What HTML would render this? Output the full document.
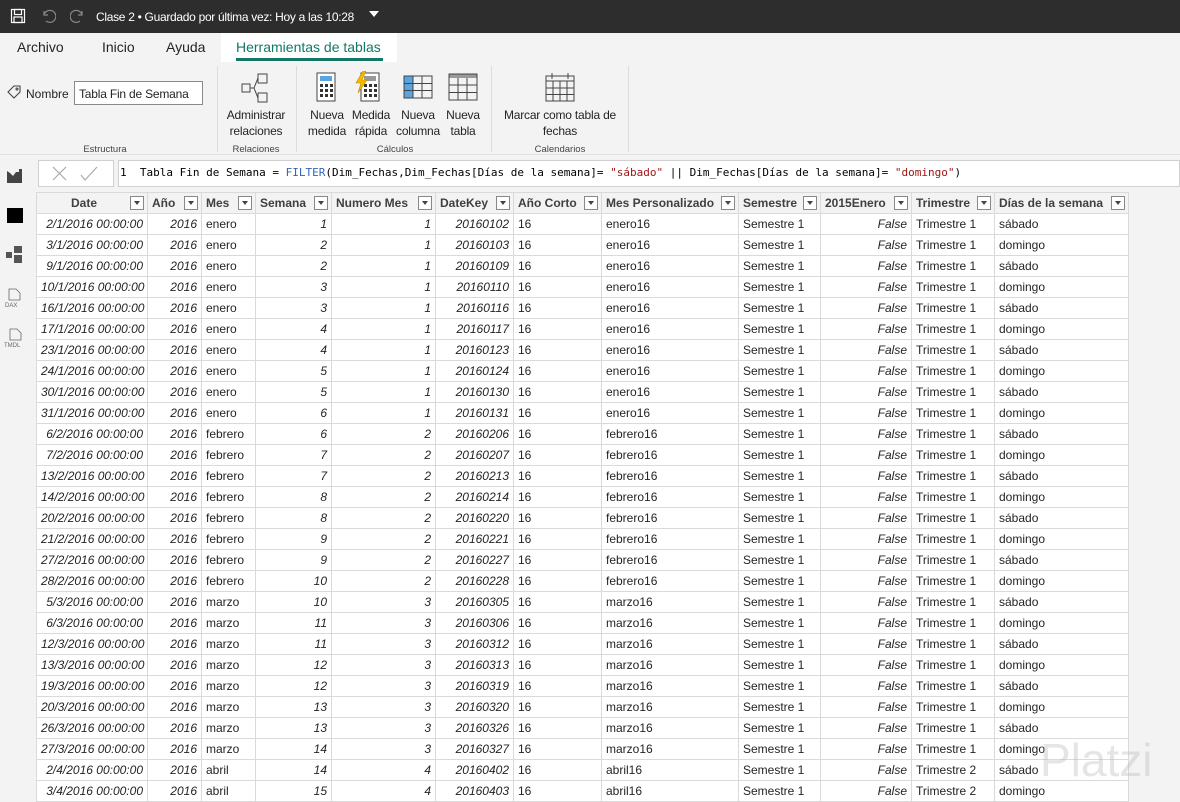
<!DOCTYPE html>
<html><head><meta charset="utf-8"><style>
*{box-sizing:border-box;margin:0;padding:0}
body{width:1180px;height:798px;overflow:hidden;background:#f3f3f3;font-family:"Liberation Sans",sans-serif;position:relative;color:#252423}
.title{position:absolute;left:0;top:0;width:1180px;height:33px;background:#2d2d2d;color:#fff;font-size:12px;letter-spacing:-0.3px}
.tabs{position:absolute;top:33px;left:0;width:1180px;height:30px;background:#f3f3f3;font-size:14px}
.tabs span{position:absolute;top:6px}
.ribbon{position:absolute;top:62px;left:0;width:1180px;height:93px;background:#f3f3f3;border-bottom:1px solid #e1e1e1;font-size:12px}
.lbl{position:absolute;top:82px;font-size:9.5px;color:#444;text-align:center}
.sep{position:absolute;top:4px;width:1px;height:86px;background:#dcdcdc}
.btn{position:absolute;text-align:center;line-height:16px;font-size:12px;letter-spacing:-0.2px}
.side{position:absolute;left:0;top:155px;width:30px;height:643px;background:#f3f3f3}
.fbar{position:absolute;left:118px;top:160px;width:1062px;height:27px;background:#fff;border:1px solid #d0d0d0;font-family:"DejaVu Sans Mono","Liberation Mono",monospace;font-size:11px;padding:5px 0 0 1px;white-space:pre;color:#000}
.xbox{position:absolute;left:38px;top:160px;width:76px;height:27px;background:#fff;border:1px solid #d0d0d0}
table{position:absolute;left:36px;top:192px;border-collapse:collapse;table-layout:fixed;width:1092px;background:#fff;font-size:12px}
td,th{border:1px solid #dadada;height:21px;padding:0 4px;white-space:nowrap;overflow:hidden}
th{background:#f3f3f3;font-weight:bold;font-size:12px;color:#404040;text-align:left;position:relative;padding-right:20px}
th.c{text-align:center}
th i{position:absolute;right:3px;top:3px;width:14px;height:14px;border:1px solid #888;background:#fff}
th i:after{content:"";position:absolute;left:3px;top:4px;border-left:3px solid transparent;border-right:3px solid transparent;border-top:4px solid #444}
td.r{text-align:right;font-style:italic}
</style></head><body>
<div class="title">
<svg style="position:absolute;left:10px;top:8px" width="16" height="16" viewBox="0 0 16 16" fill="none" stroke="#fff" stroke-width="1.2"><rect x="1.5" y="1.5" width="13" height="13"/><rect x="4.5" y="1.5" width="7" height="5"/><rect x="4" y="9" width="8" height="5.5"/></svg>
<svg style="position:absolute;left:40px;top:8px" width="16" height="16" viewBox="0 0 16 16" fill="none" stroke="#888" stroke-width="1.2"><path d="M4 3v4h4M4 7a6 6 0 1 1 2 6"/></svg>
<svg style="position:absolute;left:70px;top:8px" width="16" height="16" viewBox="0 0 16 16" fill="none" stroke="#888" stroke-width="1.2"><path d="M12 3v4H8M12 7a6 6 0 1 0-2 6"/></svg>
<span style="position:absolute;left:96px;top:10px">Clase 2 • Guardado por última vez: Hoy a las 10:28</span>
<span style="position:absolute;left:369px;top:11px;border-left:5px solid transparent;border-right:5px solid transparent;border-top:6px solid #fff"></span>
</div>
<div class="tabs">
<span style="left:17px">Archivo</span><span style="left:102px">Inicio</span><span style="left:166px">Ayuda</span>
<div style="position:absolute;left:221px;top:0;width:176px;height:30px;background:#fff"></div>
<span style="left:236px;color:#117865">Herramientas de tablas</span>
<div style="position:absolute;left:236px;top:25px;width:147px;height:3px;background:#117865"></div>
</div>
<div class="ribbon">
<svg style="position:absolute;left:6px;top:22px" width="16" height="16" viewBox="0 0 16 16" fill="none" stroke="#444" stroke-width="1.1"><path d="M2 8l6-6h6v6l-6 6z"/><circle cx="11" cy="5" r="1"/></svg>
<span style="position:absolute;left:26px;top:25px">Nombre</span>
<div style="position:absolute;left:74px;top:19px;width:129px;height:24px;background:#fff;border:1px solid #8a8a8a;padding:5px 4px;font-size:12px;letter-spacing:-0.2px">Tabla Fin de Semana</div>
<div class="lbl" style="left:60px;width:90px">Estructura</div>
<div class="sep" style="left:217px"></div>
<svg style="position:absolute;left:240px;top:10px" width="32" height="32" viewBox="0 0 32 32" fill="none" stroke="#444" stroke-width="1"><rect x="2" y="12" width="8" height="8"/><rect x="18" y="2" width="9" height="9"/><rect x="18" y="21" width="9" height="9"/><path d="M10 16h4M14 16l4-10M14 16l4 10"/></svg>
<div class="btn" style="left:222px;top:45px;width:68px">Administrar<br>relaciones</div>
<div class="lbl" style="left:222px;width:68px">Relaciones</div>
<div class="sep" style="left:296px"></div>
<svg style="position:absolute;left:316px;top:10px" width="20" height="30" viewBox="0 0 20 30"><rect x="1" y="1" width="18" height="28" fill="#fff" stroke="#444"/><rect x="4" y="4" width="12" height="5" fill="#5aa4e0"/><g fill="#333"><rect x="4" y="12" width="3" height="3"/><rect x="9" y="12" width="3" height="3"/><rect x="14" y="12" width="3" height="3"/><rect x="4" y="17" width="3" height="3"/><rect x="9" y="17" width="3" height="3"/><rect x="14" y="17" width="3" height="3"/><rect x="4" y="22" width="3" height="3"/><rect x="9" y="22" width="3" height="3"/><rect x="14" y="22" width="3" height="3"/></g></svg>
<div class="btn" style="left:306px;top:45px;width:42px">Nueva<br>medida</div>
<svg style="position:absolute;left:355px;top:9px" width="26" height="31" viewBox="0 0 26 31"><rect x="6" y="2" width="18" height="28" fill="#fff" stroke="#444"/><rect x="9" y="5" width="12" height="5" fill="#999"/><g fill="#333"><rect x="9" y="13" width="3" height="3"/><rect x="14" y="13" width="3" height="3"/><rect x="19" y="13" width="3" height="3"/><rect x="9" y="18" width="3" height="3"/><rect x="14" y="18" width="3" height="3"/><rect x="19" y="18" width="3" height="3"/><rect x="9" y="23" width="3" height="3"/><rect x="14" y="23" width="3" height="3"/><rect x="19" y="23" width="3" height="3"/></g><path d="M8 0L1 12h5L3 22l9-13H7l4-9z" fill="#f5b800" stroke="#c88a00" stroke-width=".6"/></svg>
<div class="btn" style="left:349px;top:45px;width:44px">Medida<br>rápida</div>
<svg style="position:absolute;left:403px;top:13px" width="30" height="24" viewBox="0 0 30 24"><rect x="1" y="1" width="9" height="22" fill="#5aa4e0"/><rect x="1" y="1" width="28" height="22" fill="none" stroke="#444"/><path d="M10 1v22M19 1v22M1 8.5h28M1 15.5h28" stroke="#444"/></svg>
<div class="btn" style="left:394px;top:45px;width:48px">Nueva<br>columna</div>
<svg style="position:absolute;left:448px;top:11px" width="30" height="28" viewBox="0 0 30 28"><rect x="1" y="1" width="28" height="4" fill="#999"/><rect x="1" y="1" width="28" height="26" fill="none" stroke="#444"/><path d="M10 5v22M19 5v22M1 12h28M1 19.5h28" stroke="#444"/></svg>
<div class="btn" style="left:443px;top:45px;width:40px">Nueva<br>tabla</div>
<div class="lbl" style="left:300px;width:190px">Cálculos</div>
<div class="sep" style="left:491px"></div>
<svg style="position:absolute;left:545px;top:10px" width="30" height="30" viewBox="0 0 30 30" fill="none" stroke="#444"><rect x="1" y="4" width="28" height="25"/><path d="M1 9h28M1 16h28M1 22.5h28M8 9v20M15 9v20M22 9v20M7 1v6M23 1v6"/></svg>
<div class="btn" style="left:495px;top:45px;width:130px">Marcar como tabla de<br>fechas</div>
<div class="lbl" style="left:495px;width:130px">Calendarios</div>
<div class="sep" style="left:628px"></div>
</div>
<div class="side">
<svg style="position:absolute;left:7px;top:14px" width="15" height="14" viewBox="0 0 15 14"><path d="M0 2l3 2 3 3 3-4 3 0 0-3h3v14H0z" fill="#444"/></svg>
<div style="position:absolute;left:7px;top:53px;width:16px;height:15px;background:#000"></div>
<svg style="position:absolute;left:6px;top:91px" width="18" height="18" viewBox="0 0 18 18" fill="#555"><rect x="0" y="6" width="6" height="6"/><rect x="8" y="0" width="8" height="7"/><rect x="8" y="9" width="8" height="8"/></svg>
<svg style="position:absolute;left:4px;top:133px" width="22" height="20" viewBox="0 0 22 20" fill="none" stroke="#666" stroke-width=".8"><path d="M5 1h7l4 4v7H5z"/><text x="1" y="19" font-size="6" fill="#666" stroke="none" font-family="Liberation Sans">DAX</text></svg>
<svg style="position:absolute;left:3px;top:173px" width="24" height="20" viewBox="0 0 24 20" fill="none" stroke="#666" stroke-width=".8"><path d="M7 1h7l4 4v7H7z"/><text x="1" y="19" font-size="6" fill="#666" stroke="none" font-family="Liberation Sans">TMDL</text></svg>
</div>
<div class="xbox"><svg style="position:absolute;left:12px;top:5px" width="50" height="16" viewBox="0 0 50 16" fill="none" stroke="#aaa" stroke-width="1.2"><path d="M2 1l13 13M15 1L2 14M30 9l4 5 12-13"/></svg></div>
<div class="fbar">1  Tabla Fin de Semana = <span style="color:#3165bb">FILTER</span>(Dim_Fechas,Dim_Fechas[Días de la semana]= <span style="color:#a31515">"sábado"</span> || Dim_Fechas[Días de la semana]= <span style="color:#a31515">"domingo"</span>)</div>
<table>
<colgroup><col style="width:111px"><col style="width:54px"><col style="width:54px"><col style="width:76px"><col style="width:104px"><col style="width:78px"><col style="width:88px"><col style="width:137px"><col style="width:82px"><col style="width:91px"><col style="width:83px"><col style="width:134px"></colgroup>
<tr><th class="c">Date<i></i></th><th>Año<i></i></th><th>Mes<i></i></th><th>Semana<i></i></th><th>Numero Mes<i></i></th><th>DateKey<i></i></th><th>Año Corto<i></i></th><th>Mes Personalizado<i></i></th><th>Semestre<i></i></th><th>2015Enero<i></i></th><th>Trimestre<i></i></th><th>Días de la semana<i></i></th></tr>
<tr><td class="r">2/1/2016 00:00:00</td><td class="r">2016</td><td>enero</td><td class="r">1</td><td class="r">1</td><td class="r">20160102</td><td>16</td><td>enero16</td><td>Semestre 1</td><td class="r">False</td><td>Trimestre 1</td><td>sábado</td></tr>
<tr><td class="r">3/1/2016 00:00:00</td><td class="r">2016</td><td>enero</td><td class="r">2</td><td class="r">1</td><td class="r">20160103</td><td>16</td><td>enero16</td><td>Semestre 1</td><td class="r">False</td><td>Trimestre 1</td><td>domingo</td></tr>
<tr><td class="r">9/1/2016 00:00:00</td><td class="r">2016</td><td>enero</td><td class="r">2</td><td class="r">1</td><td class="r">20160109</td><td>16</td><td>enero16</td><td>Semestre 1</td><td class="r">False</td><td>Trimestre 1</td><td>sábado</td></tr>
<tr><td class="r">10/1/2016 00:00:00</td><td class="r">2016</td><td>enero</td><td class="r">3</td><td class="r">1</td><td class="r">20160110</td><td>16</td><td>enero16</td><td>Semestre 1</td><td class="r">False</td><td>Trimestre 1</td><td>domingo</td></tr>
<tr><td class="r">16/1/2016 00:00:00</td><td class="r">2016</td><td>enero</td><td class="r">3</td><td class="r">1</td><td class="r">20160116</td><td>16</td><td>enero16</td><td>Semestre 1</td><td class="r">False</td><td>Trimestre 1</td><td>sábado</td></tr>
<tr><td class="r">17/1/2016 00:00:00</td><td class="r">2016</td><td>enero</td><td class="r">4</td><td class="r">1</td><td class="r">20160117</td><td>16</td><td>enero16</td><td>Semestre 1</td><td class="r">False</td><td>Trimestre 1</td><td>domingo</td></tr>
<tr><td class="r">23/1/2016 00:00:00</td><td class="r">2016</td><td>enero</td><td class="r">4</td><td class="r">1</td><td class="r">20160123</td><td>16</td><td>enero16</td><td>Semestre 1</td><td class="r">False</td><td>Trimestre 1</td><td>sábado</td></tr>
<tr><td class="r">24/1/2016 00:00:00</td><td class="r">2016</td><td>enero</td><td class="r">5</td><td class="r">1</td><td class="r">20160124</td><td>16</td><td>enero16</td><td>Semestre 1</td><td class="r">False</td><td>Trimestre 1</td><td>domingo</td></tr>
<tr><td class="r">30/1/2016 00:00:00</td><td class="r">2016</td><td>enero</td><td class="r">5</td><td class="r">1</td><td class="r">20160130</td><td>16</td><td>enero16</td><td>Semestre 1</td><td class="r">False</td><td>Trimestre 1</td><td>sábado</td></tr>
<tr><td class="r">31/1/2016 00:00:00</td><td class="r">2016</td><td>enero</td><td class="r">6</td><td class="r">1</td><td class="r">20160131</td><td>16</td><td>enero16</td><td>Semestre 1</td><td class="r">False</td><td>Trimestre 1</td><td>domingo</td></tr>
<tr><td class="r">6/2/2016 00:00:00</td><td class="r">2016</td><td>febrero</td><td class="r">6</td><td class="r">2</td><td class="r">20160206</td><td>16</td><td>febrero16</td><td>Semestre 1</td><td class="r">False</td><td>Trimestre 1</td><td>sábado</td></tr>
<tr><td class="r">7/2/2016 00:00:00</td><td class="r">2016</td><td>febrero</td><td class="r">7</td><td class="r">2</td><td class="r">20160207</td><td>16</td><td>febrero16</td><td>Semestre 1</td><td class="r">False</td><td>Trimestre 1</td><td>domingo</td></tr>
<tr><td class="r">13/2/2016 00:00:00</td><td class="r">2016</td><td>febrero</td><td class="r">7</td><td class="r">2</td><td class="r">20160213</td><td>16</td><td>febrero16</td><td>Semestre 1</td><td class="r">False</td><td>Trimestre 1</td><td>sábado</td></tr>
<tr><td class="r">14/2/2016 00:00:00</td><td class="r">2016</td><td>febrero</td><td class="r">8</td><td class="r">2</td><td class="r">20160214</td><td>16</td><td>febrero16</td><td>Semestre 1</td><td class="r">False</td><td>Trimestre 1</td><td>domingo</td></tr>
<tr><td class="r">20/2/2016 00:00:00</td><td class="r">2016</td><td>febrero</td><td class="r">8</td><td class="r">2</td><td class="r">20160220</td><td>16</td><td>febrero16</td><td>Semestre 1</td><td class="r">False</td><td>Trimestre 1</td><td>sábado</td></tr>
<tr><td class="r">21/2/2016 00:00:00</td><td class="r">2016</td><td>febrero</td><td class="r">9</td><td class="r">2</td><td class="r">20160221</td><td>16</td><td>febrero16</td><td>Semestre 1</td><td class="r">False</td><td>Trimestre 1</td><td>domingo</td></tr>
<tr><td class="r">27/2/2016 00:00:00</td><td class="r">2016</td><td>febrero</td><td class="r">9</td><td class="r">2</td><td class="r">20160227</td><td>16</td><td>febrero16</td><td>Semestre 1</td><td class="r">False</td><td>Trimestre 1</td><td>sábado</td></tr>
<tr><td class="r">28/2/2016 00:00:00</td><td class="r">2016</td><td>febrero</td><td class="r">10</td><td class="r">2</td><td class="r">20160228</td><td>16</td><td>febrero16</td><td>Semestre 1</td><td class="r">False</td><td>Trimestre 1</td><td>domingo</td></tr>
<tr><td class="r">5/3/2016 00:00:00</td><td class="r">2016</td><td>marzo</td><td class="r">10</td><td class="r">3</td><td class="r">20160305</td><td>16</td><td>marzo16</td><td>Semestre 1</td><td class="r">False</td><td>Trimestre 1</td><td>sábado</td></tr>
<tr><td class="r">6/3/2016 00:00:00</td><td class="r">2016</td><td>marzo</td><td class="r">11</td><td class="r">3</td><td class="r">20160306</td><td>16</td><td>marzo16</td><td>Semestre 1</td><td class="r">False</td><td>Trimestre 1</td><td>domingo</td></tr>
<tr><td class="r">12/3/2016 00:00:00</td><td class="r">2016</td><td>marzo</td><td class="r">11</td><td class="r">3</td><td class="r">20160312</td><td>16</td><td>marzo16</td><td>Semestre 1</td><td class="r">False</td><td>Trimestre 1</td><td>sábado</td></tr>
<tr><td class="r">13/3/2016 00:00:00</td><td class="r">2016</td><td>marzo</td><td class="r">12</td><td class="r">3</td><td class="r">20160313</td><td>16</td><td>marzo16</td><td>Semestre 1</td><td class="r">False</td><td>Trimestre 1</td><td>domingo</td></tr>
<tr><td class="r">19/3/2016 00:00:00</td><td class="r">2016</td><td>marzo</td><td class="r">12</td><td class="r">3</td><td class="r">20160319</td><td>16</td><td>marzo16</td><td>Semestre 1</td><td class="r">False</td><td>Trimestre 1</td><td>sábado</td></tr>
<tr><td class="r">20/3/2016 00:00:00</td><td class="r">2016</td><td>marzo</td><td class="r">13</td><td class="r">3</td><td class="r">20160320</td><td>16</td><td>marzo16</td><td>Semestre 1</td><td class="r">False</td><td>Trimestre 1</td><td>domingo</td></tr>
<tr><td class="r">26/3/2016 00:00:00</td><td class="r">2016</td><td>marzo</td><td class="r">13</td><td class="r">3</td><td class="r">20160326</td><td>16</td><td>marzo16</td><td>Semestre 1</td><td class="r">False</td><td>Trimestre 1</td><td>sábado</td></tr>
<tr><td class="r">27/3/2016 00:00:00</td><td class="r">2016</td><td>marzo</td><td class="r">14</td><td class="r">3</td><td class="r">20160327</td><td>16</td><td>marzo16</td><td>Semestre 1</td><td class="r">False</td><td>Trimestre 1</td><td>domingo</td></tr>
<tr><td class="r">2/4/2016 00:00:00</td><td class="r">2016</td><td>abril</td><td class="r">14</td><td class="r">4</td><td class="r">20160402</td><td>16</td><td>abril16</td><td>Semestre 1</td><td class="r">False</td><td>Trimestre 2</td><td>sábado</td></tr>
<tr><td class="r">3/4/2016 00:00:00</td><td class="r">2016</td><td>abril</td><td class="r">15</td><td class="r">4</td><td class="r">20160403</td><td>16</td><td>abril16</td><td>Semestre 1</td><td class="r">False</td><td>Trimestre 2</td><td>domingo</td></tr>
</table>
<div style="position:absolute;left:1040px;top:733px;font-size:46px;color:rgba(180,180,180,.35);font-family:'Liberation Sans',sans-serif">Platzi</div>
</body></html>
